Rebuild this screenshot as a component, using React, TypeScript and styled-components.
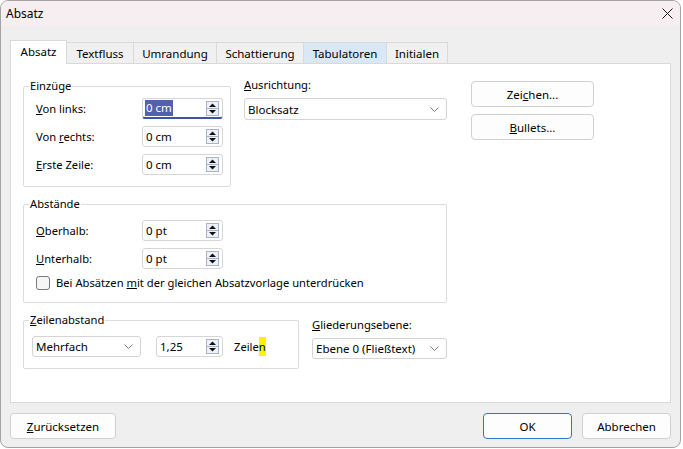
import React from 'react';
import styled, { createGlobalStyle } from 'styled-components';

const GlobalStyle = createGlobalStyle`
  html, body {
    margin: 0;
    padding: 0;
    background: #ffffff;
  }
  body {
    font-family: 'Noto Sans', 'Segoe UI', sans-serif;
    font-size: 11.2px;
    color: #000;
  }
`;

const Window = styled.div`
  width: 681px;
  height: 448px;
  box-sizing: border-box;
  border: 1px solid #a3a3a3;
  border-radius: 8px;
  overflow: hidden;
  background: #efefef;
  display: flex;
  flex-direction: column;
`;

const TitleBar = styled.div`
  height: 25px;
  flex: none;
  background: #f6eef0;
  display: flex;
  align-items: center;
  justify-content: space-between;
  padding: 0 7px 0 5px;
  font-size: 12px;
`;

const Body = styled.div`
  flex: 1;
  display: flex;
  flex-direction: column;
  padding: 14px 9px 0 9px;
`;

const TabStrip = styled.div`
  display: flex;
  align-items: flex-end;
  height: 23px;
`;

const Tab = styled.div<{ $w: number; $active?: boolean; $hover?: boolean }>`
  width: ${p => p.$w}px;
  height: ${p => (p.$active ? 24 : 21)}px;
  margin-bottom: ${p => (p.$active ? -1 : 0)}px;
  box-sizing: border-box;
  border: 1px solid #d9d9d9;
  border-bottom: none;
  background: ${p => (p.$active ? '#fff' : p.$hover ? '#d9e8f7' : '#f0f0f0')};
  position: relative;
  z-index: ${p => (p.$active ? 1 : 0)};
  display: flex;
  align-items: center;
  justify-content: center;
  padding-bottom: ${p => (p.$active ? 2 : 0)}px;
  font-size: 11.5px;

  & + & {
    margin-left: -1px;
  }
`;

const Panel = styled.div`
  height: 340px;
  box-sizing: border-box;
  background: #fff;
  border: 1px solid #d9d9d9;
  padding: 14px 0 0 12px;
  display: flex;
  gap: 24px;
`;

const MainColumn = styled.div`
  width: 424px;
  display: flex;
  flex-direction: column;
  gap: 10px;
`;

const Row = styled.div<{ $gap: number }>`
  display: flex;
  align-items: flex-start;
  gap: ${p => p.$gap}px;
`;

const GroupBox = styled.fieldset<{ $w: number; $pt: number; $pl: number; $mt?: number }>`
  width: ${p => p.$w}px;
  box-sizing: border-box;
  margin: ${p => p.$mt ?? 0}px 0 0 0;
  min-width: 0;
  border: 1px solid #dcdcdc;
  border-radius: 2px;
  padding: ${p => p.$pt}px 0 11px ${p => p.$pl}px;
`;

const Legend = styled.legend<{ $ml: number }>`
  padding: 0 1px;
  margin-left: ${p => p.$ml}px;
  line-height: 14px;
`;

const FieldGrid = styled.div`
  display: grid;
  grid-template-columns: 106px 81px;
  row-gap: 7px;
  align-items: center;
`;

const Label = styled.span`
  line-height: 14px;
  white-space: nowrap;
`;

const Key = styled.span`
  text-decoration: underline;
  text-underline-offset: 1px;
`;

const SpinBox = styled.div<{ $w: number; $focused?: boolean }>`
  width: ${p => p.$w}px;
  height: 21px;
  box-sizing: border-box;
  border: 1px solid #d6d6d6;
  border-bottom: ${p => (p.$focused ? '2px solid #4252a6' : '1px solid #d6d6d6')};
  border-radius: 3px;
  background: #fff;
  display: flex;
  align-items: center;
  justify-content: space-between;
  padding: 0 3px 0 2px;
  font-size: 11.5px;
`;

const Selected = styled.span`
  background: #5361ad;
  color: #fff;
  line-height: 16px;
  padding: 0 1px;
`;

const Value = styled.span`
  padding-left: 1px;
`;

const SelectBox = styled.div<{ $w: number; $h?: number }>`
  width: ${p => p.$w}px;
  height: ${p => p.$h ?? 21}px;
  box-sizing: border-box;
  border: 1px solid #d4d4d4;
  border-radius: 3px;
  background: #fff;
  display: flex;
  align-items: center;
  justify-content: space-between;
  padding: 0 7px 0 3px;
  font-size: 11.5px;
`;

const FieldBlock = styled.div<{ $w: number; $mt?: number }>`
  width: ${p => p.$w}px;
  margin-top: ${p => p.$mt ?? 0}px;
  display: flex;
  flex-direction: column;
  gap: 6px;
`;

const CheckRow = styled.div`
  grid-column: 1 / -1;
  display: flex;
  align-items: center;
  gap: 6px;
  height: 16px;
  margin-top: -1px;
`;

const CheckBox = styled.div`
  flex: none;
  width: 14px;
  height: 14px;
  box-sizing: border-box;
  border: 1px solid #7a7a7a;
  border-radius: 3px;
  background: #f6f6f6;
`;

const LineRow = styled.div`
  display: flex;
  align-items: center;
`;

const Highlight = styled.span`
  display: inline-block;
  background: #fff200;
  line-height: 19px;
`;

const SideColumn = styled.div`
  display: flex;
  flex-direction: column;
  gap: 7px;
  margin-top: 3px;
`;

const PushButton = styled.div<{ $w: number; $default?: boolean }>`
  width: ${p => p.$w}px;
  height: 26px;
  box-sizing: border-box;
  border: 1px solid ${p => (p.$default ? '#2b79c7' : '#d0d0d0')};
  border-radius: 4px;
  background: #fdfdfd;
  display: flex;
  align-items: center;
  justify-content: center;
  font-size: 11.5px;
`;

const Footer = styled.div`
  display: flex;
  align-items: center;
  margin-top: 10px;
  gap: 10px;
`;

const Spacer = styled.div`
  flex: 1;
`;

const CloseIcon = () => (
  <svg width="11" height="11" viewBox="0 0 11 11">
    <path d="M0.5 0.5 L10.5 10.5 M10.5 0.5 L0.5 10.5" stroke="#1a1a1a" strokeWidth="1" />
  </svg>
);

const Spinner = () => (
  <svg width="13" height="15" viewBox="0 0 13 15">
    <rect x="0.5" y="0.5" width="12" height="14" fill="#eef1f7" stroke="#a9b3c8" />
    <line x1="1" y1="7.5" x2="12" y2="7.5" stroke="#a9b3c8" />
    <path d="M3 6 L6.5 2.5 L10 6 Z" fill="#111" />
    <path d="M3 9 L10 9 L6.5 12.5 Z" fill="#111" />
  </svg>
);

const Chevron = () => (
  <svg width="9" height="5" viewBox="0 0 9 5">
    <path d="M0.5 0.5 L4.5 4.5 L8.5 0.5" fill="none" stroke="#7a7a7a" strokeWidth="1" />
  </svg>
);

const tabs = [
  { label: 'Absatz', w: 57, active: true },
  { label: 'Textfluss', w: 68 },
  { label: 'Umrandung', w: 84 },
  { label: 'Schattierung', w: 88 },
  { label: 'Tabulatoren', w: 84, hover: true },
  { label: 'Initialen', w: 62 }
];

export default function App() {
  return (
    <>
      <GlobalStyle />
      <Window>
        <TitleBar>
          <span>Absatz</span>
          <CloseIcon />
        </TitleBar>
        <Body>
          <TabStrip>
            {tabs.map(t => (
              <Tab key={t.label} $w={t.w} $active={t.active} $hover={t.hover}>
                {t.label}
              </Tab>
            ))}
          </TabStrip>
          <Panel>
            <MainColumn>
              <Row $gap={13}>
                <GroupBox $w={208} $pt={5} $pl={12} $mt={1}>
                  <Legend $ml={-7}>Einzüge</Legend>
                  <FieldGrid>
                    <Label>
                      <Key>V</Key>on links:
                    </Label>
                    <SpinBox $w={81} $focused>
                      <Selected>0 cm</Selected>
                      <Spinner />
                    </SpinBox>
                    <Label>
                      Von <Key>r</Key>echts:
                    </Label>
                    <SpinBox $w={81}>
                      <Value>0 cm</Value>
                      <Spinner />
                    </SpinBox>
                    <Label>
                      <Key>E</Key>rste Zeile:
                    </Label>
                    <SpinBox $w={81}>
                      <Value>0 cm</Value>
                      <Spinner />
                    </SpinBox>
                  </FieldGrid>
                </GroupBox>
                <FieldBlock $w={203}>
                  <Label>
                    <Key>A</Key>usrichtung:
                  </Label>
                  <SelectBox $w={203} $h={22}>
                    <span>Blocksatz</span>
                    <Chevron />
                  </SelectBox>
                </FieldBlock>
              </Row>

              <GroupBox $w={424} $pt={9} $pl={12}>
                <Legend $ml={-7}>Abstände</Legend>
                <FieldGrid>
                  <Label>
                    <Key>O</Key>berhalb:
                  </Label>
                  <SpinBox $w={81}>
                    <Value>0 pt</Value>
                    <Spinner />
                  </SpinBox>
                  <Label>
                    <Key>U</Key>nterhalb:
                  </Label>
                  <SpinBox $w={81}>
                    <Value>0 pt</Value>
                    <Spinner />
                  </SpinBox>
                  <CheckRow>
                    <CheckBox />
                    <Label>
                      Bei Absätzen <Key>m</Key>it der gleichen Absatzvorlage unterdrücken
                    </Label>
                  </CheckRow>
                </FieldGrid>
              </GroupBox>

              <Row $gap={13}>
                <GroupBox $w={277} $pt={9} $pl={8}>
                  <Legend $ml={-3}>
                    <Key>Z</Key>eilenabstand
                  </Legend>
                  <LineRow>
                    <SelectBox $w={109}>
                      <span>Mehrfach</span>
                      <Chevron />
                    </SelectBox>
                    <SpinBox $w={67} style={{ marginLeft: 15 }}>
                      <Value>1,25</Value>
                      <Spinner />
                    </SpinBox>
                    <Label style={{ marginLeft: 11 }}>
                      Zeile<Highlight>n</Highlight>
                    </Label>
                  </LineRow>
                </GroupBox>
                <FieldBlock $w={135} $mt={5}>
                  <Label>
                    <Key>G</Key>liederungsebene:
                  </Label>
                  <SelectBox $w={135}>
                    <span>Ebene 0 (Fließtext)</span>
                    <Chevron />
                  </SelectBox>
                </FieldBlock>
              </Row>
            </MainColumn>

            <SideColumn>
              <PushButton $w={123}>
                Zei<Key>c</Key>hen...
              </PushButton>
              <PushButton $w={123}>
                <Key>B</Key>ullets...
              </PushButton>
            </SideColumn>
          </Panel>

          <Footer>
            <PushButton $w={106}>
              <Key>Z</Key>urücksetzen
            </PushButton>
            <Spacer />
            <PushButton $w={89} $default>
              OK
            </PushButton>
            <PushButton $w={89}>Abbrechen</PushButton>
          </Footer>
        </Body>
      </Window>
    </>
  );
}
